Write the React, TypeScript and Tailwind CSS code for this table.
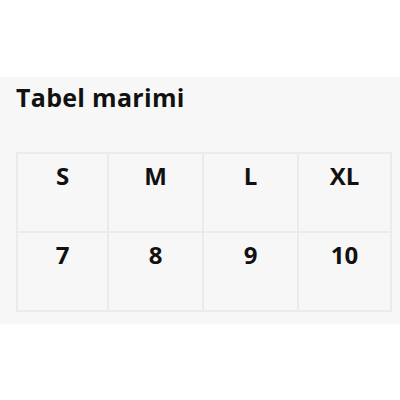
export default function App() {
  const sizes = ['S', 'M', 'L', 'XL'];
  const values = ['7', '8', '9', '10'];
  const widths = ['w-[91px]', 'w-[95px]', 'w-[95px]', ''];

  return (
    <div className="min-h-[400px] bg-white pt-[77px] font-['Open_Sans',sans-serif] text-[#111]">
      <section className="bg-[#f7f7f7] pb-3 pl-4 pr-2 pt-[2px]">
        <h2 className="text-[25px] font-bold leading-[36px] tracking-[0.3px]">Tabel marimi</h2>
        <table className="mt-[37px] w-full table-fixed border-collapse">
          <tbody>
            {[sizes, values].map((row, r) => (
              <tr key={r}>
                {row.map((c, i) => (
                  <td
                    key={c}
                    className={`${widths[i]} h-[79px] border-2 border-[#ebebeb] pt-[6px] align-top text-center text-[24px] font-bold leading-[32px]`}
                  >
                    {c}
                  </td>
                ))}
              </tr>
            ))}
          </tbody>
        </table>
      </section>
    </div>
  );
}
